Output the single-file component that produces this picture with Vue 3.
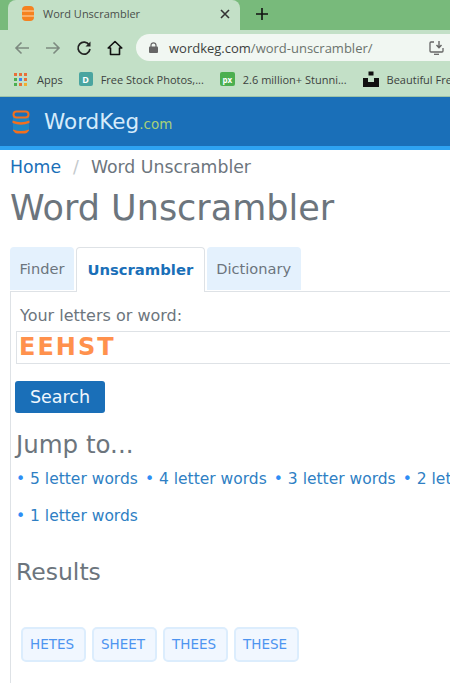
<script setup>
const bookmarks = [
  { label: 'Apps', icon: 'apps' },
  { label: 'Free Stock Photos,...', icon: 'd' },
  { label: '2.6 million+ Stunni...', icon: 'px' },
  { label: 'Beautiful Free', icon: 'u' },
];
const jumpLinks = ['5 letter words', '4 letter words', '3 letter words', '2 letter words', '1 letter words'];
const results = ['HETES', 'SHEET', 'THEES', 'THESE'];
const dots = ['#e8703a', '#e8703a', '#e8703a', '#4caf50', '#3b82f6', '#e8703a', '#4caf50', '#e8703a', '#f0b030'];
</script>

<template>
  <div class="page">
    <div class="tabstrip">
      <div class="browser-tab">
        <svg class="favicon" width="12" height="15" viewBox="0 0 12 15">
          <rect width="12" height="15" rx="4" fill="#f58220" />
          <path d="M0 5h12M0 10h12" stroke="#ffd9b0" stroke-width="1" />
        </svg>
        <span class="browser-tab-title">Word Unscrambler</span>
        <svg class="close" width="10" height="10" viewBox="0 0 10 10">
          <path d="M1 1l8 8M9 1l-8 8" stroke="#333" stroke-width="1.6" />
        </svg>
      </div>
      <svg class="plus" width="12" height="12" viewBox="0 0 12 12">
        <path d="M6 0v12M0 6h12" stroke="#111" stroke-width="1.6" />
      </svg>
    </div>

    <div class="toolbar">
      <svg class="nav-icon" width="16" height="14" viewBox="0 0 16 14">
        <path d="M15 7H2M7.500 1.500L2 7l5.500 5.500" fill="none" stroke="#7d8a80" stroke-width="1.6" />
      </svg>
      <svg class="nav-icon" width="16" height="14" viewBox="0 0 16 14">
        <path d="M1 7h13M8.500 1.500L14 7l-5.500 5.500" fill="none" stroke="#7d8a80" stroke-width="1.6" />
      </svg>
      <svg class="nav-icon" width="16" height="16" viewBox="0 0 16 16">
        <path d="M13.200 5A6 6 0 1 0 14 9" fill="none" stroke="#222" stroke-width="1.700" />
        <path d="M14.500 1.500v5h-5z" fill="#222" />
      </svg>
      <svg class="nav-icon" width="16" height="16" viewBox="0 0 16 16">
        <path d="M8 1.500L1.200 8H3.500v6.500h9V8h2.300z" fill="none" stroke="#111" stroke-width="1.600" stroke-linejoin="round" />
      </svg>
      <div class="omnibox">
        <svg width="9" height="11" viewBox="0 0 9 11">
          <path d="M2 5V3.300a2.500 2.500 0 0 1 5 0V5" fill="none" stroke="#666" stroke-width="1.200" />
          <rect y="4.500" width="9" height="6.500" rx="1" fill="#666" />
        </svg>
        <span class="url"><span class="url-host">wordkeg.com</span>/word-unscrambler/</span>
        <svg class="install" width="15" height="14" viewBox="0 0 15 14">
          <path d="M5 1H2a1 1 0 0 0-1 1v8a1 1 0 0 0 1 1h11a1 1 0 0 0 1-1V7" fill="none" stroke="#666" stroke-width="1.300" />
          <path d="M10 0v6M7.500 4L10 6.800 12.500 4" fill="none" stroke="#666" stroke-width="1.400" />
          <path d="M5 13.300h5" stroke="#666" stroke-width="1.300" />
        </svg>
      </div>
    </div>

    <div class="bookmarks">
      <div v-for="b in bookmarks" :key="b.label" class="bookmark">
        <div v-if="b.icon == 'apps'" class="apps-grid">
          <i v-for="(c, i) in dots" :key="i" :style="{ background: c }"></i>
        </div>
        <span v-else-if="b.icon == 'd'" class="bm-icon bm-d">D</span>
        <span v-else-if="b.icon == 'px'" class="bm-icon bm-px">px</span>
        <svg v-else width="16" height="16" viewBox="0 0 16 16">
          <path d="M5.500 0.500h5v4h-5zM0 7h5v4h6V7h5v9H0z" fill="#111" />
        </svg>
        <span class="bm-label">{{ b.label }}</span>
      </div>
    </div>

    <header class="site-header">
      <svg width="18" height="24" viewBox="0 0 18 24">
        <path d="M1 5h16v14a4 4 0 0 1-4 4H5a4 4 0 0 1-4-4z" fill="#1d86c4" />
        <rect x="1.500" y="1.500" width="15" height="6" rx="3" fill="#1a6fb8" stroke="#f26f1e" stroke-width="2" />
        <path d="M0.500 10.500q8.500 3.500 17 0v2.500q-8.500 3.500-17 0z" fill="#f26f1e" />
        <path d="M1 19.500q8 3 16 0v1q-2 3-4 3H5q-2 0-4-3z" fill="#f26f1e" />
      </svg>
      <span class="brand">WordKeg<small>.com</small></span>
    </header>

    <main class="content">
      <nav class="breadcrumb">
        <a>Home</a>
        <span class="slash">/</span>
        <span>Word Unscrambler</span>
      </nav>
      <h1>Word Unscrambler</h1>

      <div class="tabs">
        <div class="tab">Finder</div>
        <div class="tab active">Unscrambler</div>
        <div class="tab">Dictionary</div>
      </div>

      <section class="panel">
        <label class="field-label">Your letters or word:</label>
        <div class="word-input">EEHST</div>
        <button class="search">Search</button>

        <h2 class="jump-title">Jump to...</h2>
        <div class="jump-links">
          <a v-for="link in jumpLinks" :key="link"><span class="dot">•</span> {{ link }}</a>
        </div>

        <h2 class="results-title">Results</h2>
        <div class="chips">
          <span v-for="word in results" :key="word" class="chip">{{ word }}</span>
        </div>
      </section>
    </main>
  </div>
</template>

<style>
html,
body {
  margin: 0;
  background: #fff;
  overflow: hidden;
}
</style>

<style scoped>
.page {
  width: 450px;
  height: 683px;
  overflow: hidden;
  font-family: "DejaVu Sans", Verdana, sans-serif;
  color: #6c757d;
  background: #fff;
}

/* browser chrome */
.tabstrip {
  height: 30px;
  background: #78ba7b;
  display: flex;
  align-items: center;
}
.browser-tab {
  width: 232px;
  height: 30px;
  margin-left: 8px;
  box-sizing: border-box;
  padding: 0 10px 3px 14px;
  background: #c3e0c7;
  border-radius: 8px 8px 0 0;
  display: flex;
  align-items: center;
  flex-shrink: 0;
}
.favicon {
  margin-right: 9px;
}
.browser-tab-title {
  flex: 1;
  font-family: "Open Sans", sans-serif;
  font-size: 11px;
  color: #4a4f4b;
}
.plus {
  margin: 0 0 3px 16px;
}
.toolbar {
  height: 32px;
  box-sizing: border-box;
  padding: 4px 0 1px 14px;
  background: #c3e0c7;
  display: flex;
  align-items: center;
}
.nav-icon {
  margin-right: 15px;
  flex-shrink: 0;
}
.omnibox {
  flex: 1;
  height: 27px;
  margin-left: -2px;
  padding: 0 6px 0 13px;
  background: #f1f7f2;
  border-radius: 14px 0 0 14px;
  display: flex;
  align-items: center;
  gap: 11px;
  font-family: "Open Sans", sans-serif;
  font-size: 13px;
  color: #6b736d;
}
.url {
  flex: 1;
  white-space: nowrap;
}
.url-host {
  color: #3d423e;
}
.bookmarks {
  height: 35px;
  background: #c3e0c7;
  border-bottom: 1px solid #9fc4a8;
  box-sizing: border-box;
  display: flex;
  align-items: center;
  padding-left: 14px;
  gap: 16px;
  white-space: nowrap;
  overflow: hidden;
  font-family: "Open Sans", sans-serif;
  font-size: 11px;
  color: #3c423e;
}
.bookmark {
  display: flex;
  align-items: center;
  gap: 8px;
  flex-shrink: 0;
}
.apps-grid {
  width: 13px;
  margin-right: 2px;
  display: grid;
  grid-template-columns: repeat(3, 3px);
  gap: 2px;
}
.apps-grid i {
  width: 3px;
  height: 3px;
}
.bm-icon {
  width: 14px;
  height: 14px;
  display: flex;
  align-items: center;
  justify-content: center;
  border-radius: 2px;
  color: #fff;
  font-size: 9px;
  font-weight: 700;
}
.bm-d {
  background: #4aa5a0;
}
.bm-px {
  width: 15px;
  background: #4caf50;
  font-size: 8px;
}

/* site */
.site-header {
  height: 53px;
  box-sizing: border-box;
  background: #1a6fb8;
  border-bottom: 4px solid #2ea3f2;
  display: flex;
  align-items: center;
  padding-left: 12px;
  gap: 14px;
}
.brand {
  font-size: 21.500px;
  color: #d6ebfb;
}
.brand small {
  font-size: 13.500px;
  color: #a8cf7a;
}
.content {
  padding-left: 10px;
}
.breadcrumb {
  height: 33px;
  box-sizing: border-box;
  display: flex;
  align-items: center;
  gap: 12px;
  font-size: 17.300px;
  white-space: nowrap;
}
.breadcrumb a {
  color: #1a6fb8;
}
.slash {
  color: #c4c9cc;
}
h1 {
  margin: 0;
  height: 64px;
  box-sizing: border-box;
  padding-top: 4px;
  font-size: 35px;
  line-height: 42px;
  font-weight: 400;
  white-space: nowrap;
}
.tabs {
  display: flex;
  align-items: flex-start;
  gap: 2px;
  height: 44px;
  position: relative;
}
.tab {
  height: 43px;
  box-sizing: border-box;
  padding: 0 9.500px;
  display: flex;
  align-items: center;
  background: #e4f1fd;
  border-radius: 4px 4px 0 0;
  font-size: 14.600px;
}
.tab.active {
  height: 45px;
  padding: 0 10.500px 2px;
  background: #fff;
  border: 1px solid #dee2e6;
  border-bottom: none;
  font-size: 14.800px;
  font-weight: 700;
  color: #1a6fb8;
}
.panel {
  border-top: 1px solid #dee2e6;
  border-left: 1px solid #dee2e6;
  border-bottom-left-radius: 4px;
  padding: 14px 0 0 5px;
  height: 400px;
  box-sizing: border-box;
}
.field-label {
  display: block;
  margin-left: 4px;
  font-size: 16px;
  line-height: 20px;
}
.word-input {
  height: 33px;
  margin-top: 5px;
  box-sizing: border-box;
  border: 1px solid #dee2e6;
  border-right: none;
  padding-left: 2px;
  font-size: 24px;
  line-height: 31px;
  font-weight: 700;
  letter-spacing: 2px;
  color: #ff914d;
}
.search {
  display: block;
  width: 90px;
  height: 32px;
  margin: 17px 0 0 -1px;
  padding: 0;
  border: none;
  border-radius: 3px;
  background: #1a6fb8;
  color: #f0f7fd;
  font-family: inherit;
  font-size: 17.500px;
}
.jump-title {
  margin: 17px 0 0;
  font-size: 24.500px;
  line-height: 30px;
  font-weight: 400;
}
.jump-links {
  width: 520px;
  margin-top: 9px;
  display: flex;
  flex-wrap: wrap;
  gap: 17px 7px;
  font-size: 15.500px;
  line-height: 20px;
  color: #2f7fc4;
}
.jump-links a {
  white-space: nowrap;
}
.dot {
  color: #2e8df5;
}
.results-title {
  margin: 32px 0 0;
  font-size: 23.500px;
  line-height: 28px;
  font-weight: 400;
}
.chips {
  display: flex;
  gap: 6px;
  margin: 41px 0 0 5px;
}
.chip {
  height: 35px;
  box-sizing: border-box;
  padding: 0 10px 1px 7px;
  display: flex;
  align-items: center;
  background: #f1f7ff;
  border: 2px solid #dcedfd;
  border-radius: 5px;
  font-size: 13.500px;
  color: #4d94f0;
}
</style>
